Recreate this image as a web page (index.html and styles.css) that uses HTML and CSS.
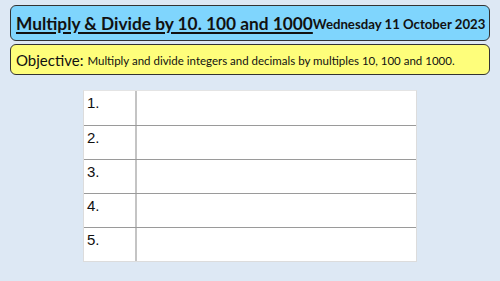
FILE: index.html
```html
<!DOCTYPE html>
<html>
<head>
<meta charset="utf-8">
<link rel="stylesheet" href="styles.css">
</head>
<body>
<div class="slide">
  <div class="header">
    <span class="title">Multiply &amp; Divide by 10. 100 and 1000</span><span class="date">Wednesday 11 October 2023</span>
  </div>
  <div class="objective">
    <span class="obj-label">Objective:</span> <span class="obj-text">Multiply and divide integers and decimals by multiples 10, 100 and 1000.</span>
  </div>
  <div class="table">
    <div class="row"><div class="num">1.</div><div class="ans"></div></div>
    <div class="row"><div class="num">2.</div><div class="ans"></div></div>
    <div class="row"><div class="num">3.</div><div class="ans"></div></div>
    <div class="row"><div class="num">4.</div><div class="ans"></div></div>
    <div class="row"><div class="num">5.</div><div class="ans"></div></div>
  </div>
</div>
</body>
</html>
```
FILE: styles.css
```css
html, body {
  margin: 0;
  padding: 0;
}
body {
  width: 500px;
  height: 281px;
  background: #dde8f4;
  font-family: Lato, "Open Sans", sans-serif;
  overflow: hidden;
}
.slide {
  width: 480px;
  padding: 5px 10px 0 10px;
  display: flex;
  flex-direction: column;
}
.header {
  box-sizing: border-box;
  width: 480px;
  height: 36px;
  background: #7fd5fd;
  border: 1.5px solid #333;
  border-radius: 6px;
  display: flex;
  align-items: center;
  padding: 0 4px 0 5px;
  white-space: nowrap;
  overflow: hidden;
}
.title {
  font-weight: bold;
  font-size: 17.3px;
  text-decoration: underline;
  text-decoration-thickness: 1.5px;
  text-underline-offset: 2px;
  color: #111;
}
.date {
  font-weight: bold;
  font-size: 13.2px;
  color: #111;
  margin-top: 2px;
}
.objective {
  box-sizing: border-box;
  width: 480px;
  margin-top: 3px;
  height: 31px;
  background: #fefe7b;
  border: 1.5px solid #333;
  border-radius: 6px;
  display: flex;
  align-items: center;
  padding: 0 5px;
  white-space: nowrap;
  color: #111;
}
.obj-label {
  font-size: 15px;
  margin-right: 4px;
}
.obj-text {
  font-size: 11.5px;
  margin-top: 2px;
}
.table {
  margin: 15px 0 0 73px;
  width: 334px;
  background: #fff;
  border: 1px solid #dcdcdc;
  border-top: 1px solid #e4e4e4;
  box-sizing: border-box;
}
.row {
  display: flex;
  height: 34px;
  border-top: 1px solid #9a9a9a;
  box-sizing: border-box;
}
.row:first-child {
  border-top: none;
}
.num {
  width: 53px;
  border-right: 2px solid #c4c4c4;
  font-family: "Liberation Sans", Arial, sans-serif;
  font-size: 15px;
  color: #111;
  padding: 3px 0 0 3px;
  box-sizing: border-box;
}
.ans {
  flex: 1;
}
```
